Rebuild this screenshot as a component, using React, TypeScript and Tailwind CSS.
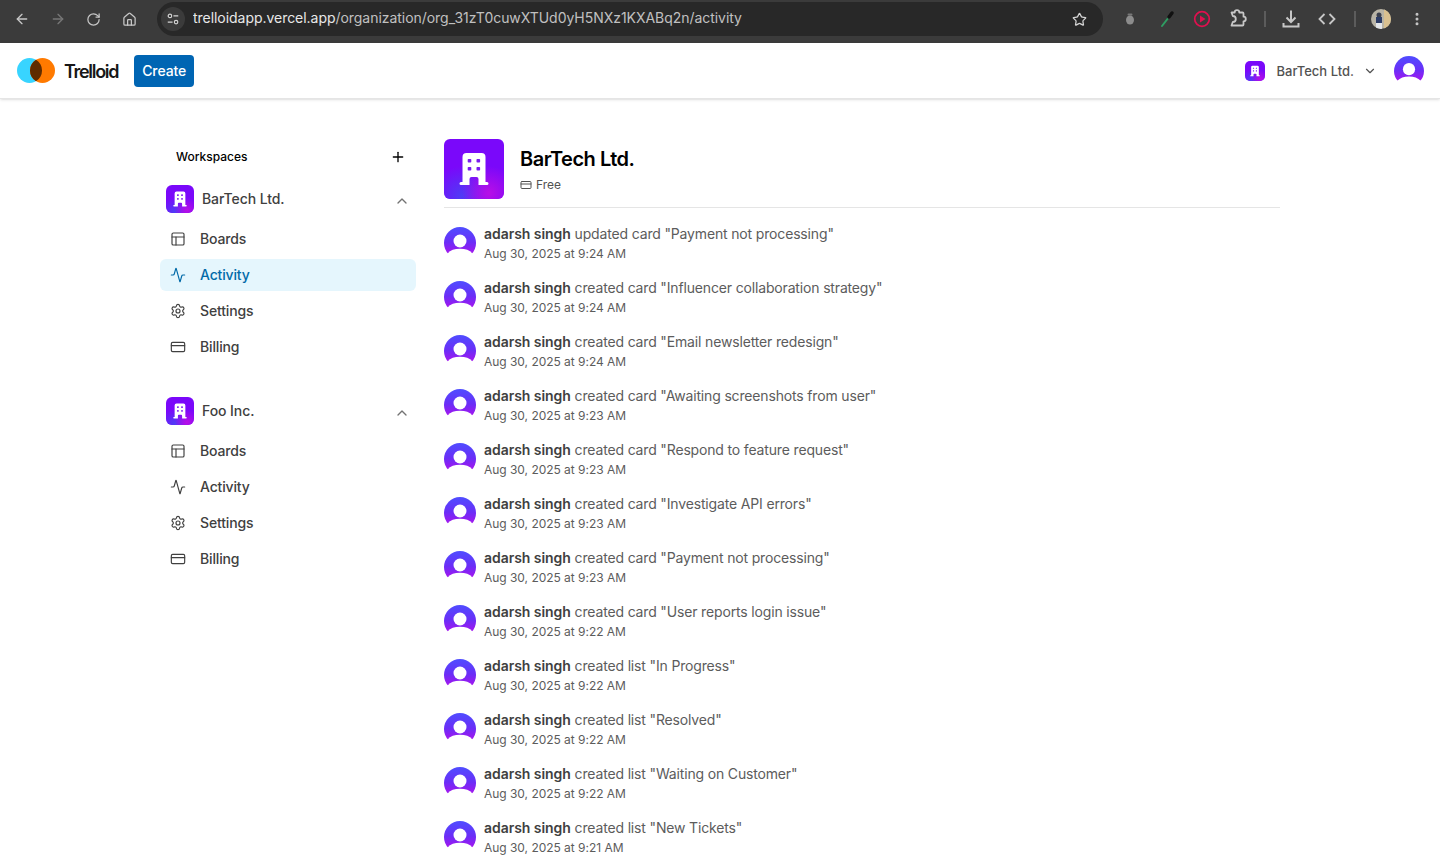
import {
  ArrowLeft,
  ArrowRight,
  RotateCw,
  Home,
  Star,
  MoreVertical,
  Plus,
  ChevronUp,
  ChevronDown,
  Layout,
  Activity,
  Settings,
  CreditCard,
} from "lucide-react";

const ACTIVITY = [
  ["updated card", "Payment not processing", "9:24"],
  ["created card", "Influencer collaboration strategy", "9:24"],
  ["created card", "Email newsletter redesign", "9:24"],
  ["created card", "Awaiting screenshots from user", "9:23"],
  ["created card", "Respond to feature request", "9:23"],
  ["created card", "Investigate API errors", "9:23"],
  ["created card", "Payment not processing", "9:23"],
  ["created card", "User reports login issue", "9:22"],
  ["created list", "In Progress", "9:22"],
  ["created list", "Resolved", "9:22"],
  ["created list", "Waiting on Customer", "9:22"],
  ["created list", "New Tickets", "9:21"],
];

const OrgLogo = ({ className, id }: { className: string; id: string }) => (
  <svg viewBox="0 0 60 60" className={className}>
    <defs>
      <radialGradient id={`${id}-a`} cx="0.3" cy="0.95" r="0.5">
        <stop offset="0" stopColor="#4f3cf5" />
        <stop offset="1" stopColor="#4f3cf5" stopOpacity="0" />
      </radialGradient>
      <radialGradient id={`${id}-b`} cx="0.75" cy="0.9" r="0.45">
        <stop offset="0" stopColor="#b80fe6" />
        <stop offset="1" stopColor="#b80fe6" stopOpacity="0" />
      </radialGradient>
    </defs>
    <rect width="60" height="60" fill="#7a08fa" />
    <rect width="60" height="60" fill={`url(#${id}-a)`} />
    <rect width="60" height="60" fill={`url(#${id}-b)`} />
    <path
      d="M18.500 18a4 4 0 0 1 4-4h15a4 4 0 0 1 4 4v25h1.500a1.500 1.500 0 0 1 0 3h-8.500v-6a2 2 0 0 0-2-2h-5a2 2 0 0 0-2 2v6h-8.500a1.500 1.500 0 0 1 0-3h1.500z"
      fill="#fff"
    />
    <rect x="23.700" y="20" width="3.600" height="3.600" rx="0.8" fill="#7a1cf0" />
    <rect x="32.500" y="20" width="3.600" height="3.600" rx="0.8" fill="#7a1cf0" />
    <rect x="23.700" y="28" width="3.600" height="3.600" rx="0.8" fill="#7a1cf0" />
    <rect x="32.500" y="28" width="3.600" height="3.600" rx="0.8" fill="#7a1cf0" />
  </svg>
);

const UserAvatar = ({ className, id }: { className: string; id: string }) => (
  <svg viewBox="0 0 32 32" className={className}>
    <defs>
      <linearGradient id={id} x1="0.5" y1="0" x2="0.5" y2="0.85">
        <stop offset="0" stopColor="#4f4dff" />
        <stop offset="0.55" stopColor="#6a2ef7" />
        <stop offset="1" stopColor="#a814ee" />
      </linearGradient>
    </defs>
    <circle cx="16" cy="16" r="16" fill={`url(#${id})`} />
    <circle cx="16" cy="14" r="6.500" fill="#fff" />
    <path d="M3.500 26.500C6.500 23.200 10.500 21.800 16 21.800s9.500 1.400 12.500 4.700L32 32H0z" fill="#fff" />
  </svg>
);

const Section = ({
  name,
  active,
  id,
}: {
  name: string;
  active?: boolean;
  id: string;
}) => {
  const items = [
    { label: "Boards", icon: Layout },
    { label: "Activity", icon: Activity },
    { label: "Settings", icon: Settings },
    { label: "Billing", icon: CreditCard },
  ];
  return (
    <div className="flex flex-col gap-1">
      <div className="mb-0.5 flex h-9 items-center justify-between pl-1.5 pr-1.5">
        <div className="flex items-center gap-2">
          <div className="h-7 w-7 overflow-hidden rounded-md">
            <OrgLogo className="h-full w-full" id={id} />
          </div>
          <span className="text-sm font-medium tracking-[-0.08px] text-neutral-700">{name}</span>
        </div>
        <ChevronUp size={16} className="mt-1 text-neutral-500" />
      </div>
      {items.map((item) => {
        const isActive = active && item.label === "Activity";
        return (
          <div
            key={item.label}
            className={`flex h-8 items-center gap-3.5 rounded-md pl-2.5 text-sm font-medium tracking-[-0.15px] ${
              isActive ? "bg-sky-500/10 text-sky-700" : "text-neutral-700"
            }`}
          >
            <item.icon size={16} strokeWidth={1.75} />
            {item.label}
          </div>
        );
      })}
    </div>
  );
};

export default function App() {
  return (
    <div className="flex h-screen flex-col overflow-hidden bg-white font-['Inter',sans-serif]">
      {/* Browser toolbar */}
      <div className="flex h-[43px] shrink-0 items-center bg-[#3b3b3b] pb-[5px] text-[#c7c7c7]">
        <div className="flex w-[157px] items-center pl-3.5">
          <ArrowLeft size={16} />
          <ArrowRight size={16} className="ml-5 text-[#777]" />
          <RotateCw size={15} className="ml-5" />
          <Home size={15} className="ml-[21px]" />
        </div>
        <div className="flex h-[34px] w-[946px] items-center rounded-full bg-[#282828] pl-1 pr-4">
          <div className="flex h-6 w-6 items-center justify-center rounded-full bg-[#3b3b3b]">
            <svg viewBox="0 0 16 16" className="h-3.5 w-3.5" fill="none" stroke="#d5d5d5" strokeWidth="1.3">
              <circle cx="4.500" cy="4.500" r="2" />
              <path d="M8.500 4.500H14M2 11.500h5.500" />
              <circle cx="11.500" cy="11.500" r="2" />
            </svg>
          </div>
          <div className="ml-2 truncate pb-0.5 text-sm tracking-[-0.04px]">
            <span className="text-[#e8e8e8]">trelloidapp.vercel.app</span>
            <span className="text-[#c0c0c0]">/organization/org_31zT0cuwXTUd0yH5NXz1KXABq2n/activity</span>
          </div>
          <Star size={15} className="ml-auto text-[#d5d5d5]" />
        </div>
        <div className="flex flex-1 items-center">
          {/* extension icons */}
          <svg viewBox="0 0 24 24" className="ml-[15px] h-6 w-6">
            <rect x="9.500" y="6.500" width="5" height="2" rx="1" fill="#777" />
            <ellipse cx="12" cy="13" rx="4" ry="4.500" fill="#8c8c8c" />
          </svg>
          <svg viewBox="0 0 24 24" className="ml-[13px] h-6 w-6" fill="none">
            <path d="M7 19L14 10" stroke="#2f9d62" strokeWidth="2" strokeLinecap="round" />
            <path d="M14 10l3-4" stroke="#111" strokeWidth="3.500" strokeLinecap="round" />
          </svg>
          <svg viewBox="0 0 24 24" className="ml-[11px] h-6 w-6" fill="none">
            <circle cx="12" cy="12" r="7.300" stroke="#e0104f" strokeWidth="1.700" />
            <path d="M10 8.500l5.500 3.500L10 15.500z" fill="#e0104f" />
          </svg>
          <svg viewBox="0 0 24 24" className="ml-[11px] h-6 w-6" fill="none" stroke="#c7c7c7" strokeWidth="1.800" strokeLinejoin="round">
            <path d="M6.500 5.500h3.200a2.300 2.300 0 0 1 4.600 0h3.200a1 1 0 0 1 1 1v3.200a2.300 2.300 0 0 1 0 4.600v3.200a1 1 0 0 1-1 1H6.500l1.300-3.500a2.500 2.500 0 0 0 0-6z" />
          </svg>
          <div className="ml-[15px] h-4 w-0.5 bg-[#5c5c5c]" />
          <svg viewBox="0 0 24 24" className="ml-[13px] h-6 w-6" fill="none" stroke="#c7c7c7" strokeWidth="2">
            <path d="M12 3.500v11M7.500 10.500l4.500 4.500 4.500-4.500M4.500 16v3.500h15V16" />
          </svg>
          <svg viewBox="0 0 24 24" className="ml-[12px] h-6 w-6" fill="none" stroke="#c7c7c7" strokeWidth="1.800">
            <path d="M9.500 7l-5 5 5 5M14.500 7l5 5-5 5" />
          </svg>
          <div className="ml-[15px] h-4 w-0.5 bg-[#5c5c5c]" />
          <svg viewBox="0 0 20 20" className="ml-[15px] h-5 w-5">
            <clipPath id="profile-clip">
              <circle cx="10" cy="10" r="10" />
            </clipPath>
            <g clipPath="url(#profile-clip)">
              <rect width="20" height="20" fill="#b9b4a6" />
              <rect x="13" width="7" height="20" fill="#d9c08f" />
              <circle cx="8" cy="6" r="2.500" fill="#3a3f4d" />
              <rect x="5" y="8" width="6" height="6" fill="#2c3c66" />
              <rect x="5" y="14" width="6" height="6" fill="#e3e6ea" />
            </g>
          </svg>
          <MoreVertical size={16} strokeWidth={2.5} className="ml-[18px]" />
        </div>
      </div>

      {/* App header */}
      <header className="flex h-[56px] shrink-0 items-center border-b border-neutral-200 pl-[17px] pr-4 shadow-sm">
        <svg viewBox="0 0 38 25" className="h-[25px] w-[38px]">
          <circle cx="12.500" cy="12.500" r="12.500" fill="#38d4ff" />
          <circle cx="25.500" cy="12.500" r="12.500" fill="#ff7a00" />
          <path d="M19 1.800a12.500 12.500 0 0 1 0 21.400a12.500 12.500 0 0 1 0-21.400z" fill="#5f2c00" />
        </svg>
        <span className="ml-[9px] mt-0.5 text-lg font-semibold tracking-[-1.300px] text-neutral-900">Trelloid</span>
        <button className="ml-[16px] h-8 rounded bg-[#0065b3] px-2 text-sm font-medium tracking-[-0.1px] text-white">
          Create
        </button>
        <div className="ml-auto flex items-center">
          <div className="h-5 w-5 overflow-hidden rounded-[5px]">
            <OrgLogo className="h-full w-full" id="header-org" />
          </div>
          <span className="ml-3 mt-0.5 text-[13px] font-medium text-neutral-600">BarTech Ltd.</span>
          <ChevronDown size={14} className="ml-[9px] text-neutral-600" />
          <UserAvatar className="ml-[17px] h-[30px] w-[30px]" id="header-user" />
        </div>
      </header>

      {/* Page body */}
      <main className="mx-auto flex w-[1120px] gap-7 pt-[40px]">
        <aside className="w-64 shrink-0">
          <div className="mb-[6px] flex h-9 items-center justify-between pl-4 pr-2.5 text-xs font-medium text-black">
            Workspaces
            <Plus size={16} />
          </div>
          <div className="flex flex-col gap-[30px]">
            <Section name="BarTech Ltd." active id="org-a" />
            <Section name="Foo Inc." id="org-b" />
          </div>
        </aside>

        <section className="min-w-0 flex-1">
          <div className="flex items-center gap-4">
            <div className="h-[60px] w-[60px] overflow-hidden rounded-md">
              <OrgLogo className="h-full w-full" id="org-main" />
            </div>
            <div>
              <h1 className="text-xl font-semibold tracking-[-0.5px] text-black">BarTech Ltd.</h1>
              <div className="mt-1 flex items-center gap-1 text-xs text-neutral-600">
                <CreditCard size={12} />
                Free
              </div>
            </div>
          </div>
          <hr className="mt-2 border-neutral-200" />
          <ul className="mt-4 flex flex-col gap-[14px]">
            {ACTIVITY.map(([action, title, time], i) => (
              <li key={i} className="flex h-10 items-center gap-2">
                <UserAvatar className="mb-0.5 h-8 w-8 shrink-0" id={`user-${i}`} />
                <div>
                  <p className="text-sm leading-5 tracking-[-0.16px] text-[#5c5c5c]">
                    <span className="font-semibold tracking-[-0.05px] text-neutral-700">adarsh singh</span> {action} "{title}"
                  </p>
                  <p className="text-xs leading-5 tracking-[-0.03px] text-[#5c5c5c]">Aug 30, 2025 at {time} AM</p>
                </div>
              </li>
            ))}
          </ul>
        </section>
      </main>
    </div>
  );
}
